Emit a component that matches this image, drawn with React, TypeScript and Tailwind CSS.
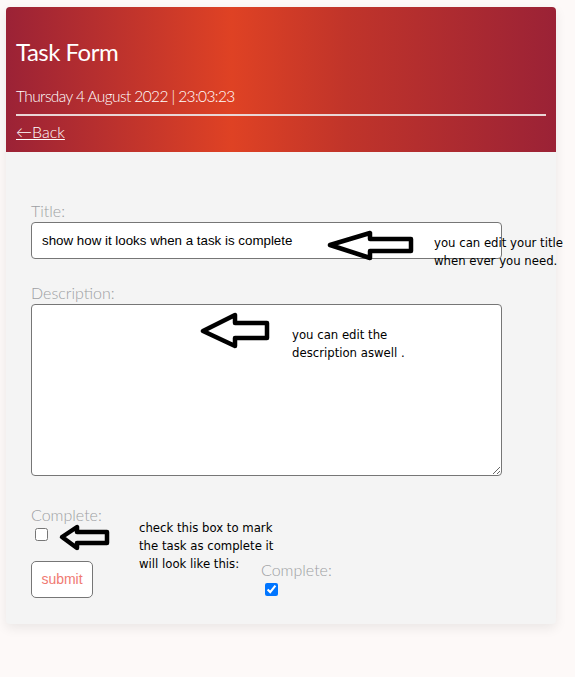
import React from "react";

const heading = { fontFamily: "Lato, 'Open Sans', sans-serif" };
const note = { fontFamily: "'DejaVu Sans Condensed', 'Noto Sans', sans-serif" };

function Arrow({ points, className }: { points: string; className: string }) {
  return (
    <svg className={`absolute ${className}`} width="100" height="40" viewBox="0 0 100 40" fill="none">
      <polygon points={points} stroke="black" strokeWidth="4.5" strokeLinejoin="round" />
    </svg>
  );
}

function Label({ children }: { children: React.ReactNode }) {
  return (
    <label className="block text-[16px] leading-[20px] font-light text-[#9d9fa3]" style={heading}>
      {children}
    </label>
  );
}

export default function App() {
  return (
    <div className="relative min-h-[677px] w-[575px] bg-[#fdf9f8] pt-[7px] pl-[6px]">
      <div className="flex w-[550px] flex-col overflow-hidden rounded-[4px] bg-[#f4f4f4] shadow-[0_4px_12px_rgba(0,0,0,0.08)]">
        {/* Header */}
        <div
          className="flex h-[145px] flex-col bg-[linear-gradient(90deg,#9b2236_0%,#df4224_41%,#c0342a_62%,#9b2236_100%)] px-[10px] pt-[30px] text-white"
          style={heading}
        >
          <h1 className="text-[24px] leading-[30px] font-normal tracking-[-0.5px]">Task Form</h1>
          <p className="mt-[19px] text-[15.5px] leading-[20px] font-light tracking-[-0.6px]">
            Thursday 4 August 2022 | 23:03:23
          </p>
          <div className="mt-[8px] h-[2px] bg-[#e9d6d6]" />
          <a href="#" className="mt-[6px] self-start text-[16px] leading-[20px] font-light underline">
            ←Back
          </a>
        </div>

        {/* Form */}
        <form className="flex flex-col items-start px-[25px] pt-[49px] pb-[26px]">
          <Label>Title:</Label>
          <input
            defaultValue="show how it looks when a task is complete"
            className="mt-[1px] h-[37px] w-[471px] rounded-[4px] border border-[#767676] bg-white px-[10px] text-[13.33px] text-black"
            style={{ fontFamily: "'Liberation Sans', Arial, sans-serif" }}
          />
          <div className="mt-[24px]">
            <Label>Description:</Label>
          </div>
          <textarea className="mt-[1px] h-[172px] w-[471px] rounded-[4px] border border-[#767676] bg-white" />
          <div className="mt-[29px]">
            <Label>Complete:</Label>
          </div>
          <input type="checkbox" className="mt-[3px] ml-[4px] h-[13px] w-[13px]" />
          <button
            type="button"
            className="mt-[20px] h-[37px] w-[62px] rounded-[5px] border border-[#767676] bg-white text-[14px] text-[#f07a72]"
            style={{ fontFamily: "'Liberation Sans', Arial, sans-serif" }}
          >
            submit
          </button>
        </form>
      </div>

      {/* Annotations drawn over the screenshot */}
      <Arrow className="left-[320px] top-[225px]" points="10,20 50,8 50,14 91,14 91,26 50,26 50,33" />
      <Arrow className="left-[195px] top-[310px]" points="8,21 40,5 40,13 72,13 72,28 40,28 40,36" />
      <Arrow className="left-[50px] top-[517px]" points="12,20 27,10 27,15 57,15 57,26 27,26 27,31" />

      <div className="absolute left-[434px] top-[234px] text-[13px] leading-[18px] text-black" style={note}>
        you can edit your title
        <br />
        when ever you need.
      </div>
      <div className="absolute left-[292px] top-[326px] text-[13px] leading-[18px] text-black" style={note}>
        you can edit the
        <br />
        description aswell .
      </div>
      <div className="absolute left-[139px] top-[519px] text-[13px] leading-[18px] text-black" style={note}>
        check this box to mark
        <br />
        the task as complete it
        <br />
        will look like this:
      </div>
      <div className="absolute left-[261px] top-[560px] flex flex-col items-start">
        <Label>Complete:</Label>
        <input type="checkbox" defaultChecked className="mt-[3px] ml-[4px] h-[13px] w-[13px]" />
      </div>
    </div>
  );
}
